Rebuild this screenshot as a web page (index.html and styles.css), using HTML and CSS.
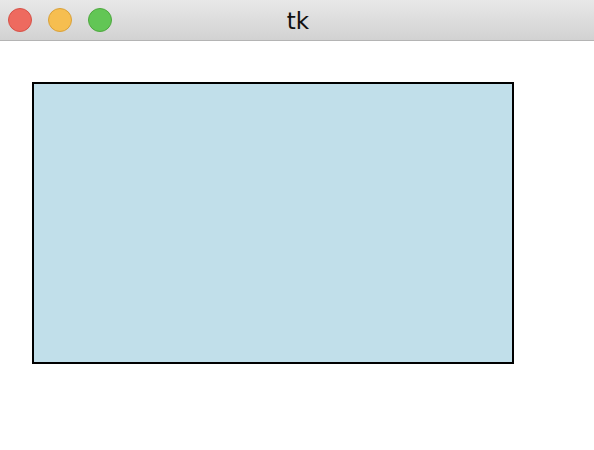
FILE: index.html
```html
<!DOCTYPE html>
<html>
<head>
<meta charset="utf-8">
<link rel="stylesheet" href="styles.css">
</head>
<body>
<div class="window">
  <div class="titlebar">
    <div class="lights">
      <span class="light red"></span>
      <span class="light yellow"></span>
      <span class="light green"></span>
    </div>
    <div class="title">tk</div>
  </div>
  <div class="content">
    <div class="canvas-rect"></div>
  </div>
</div>
</body>
</html>
```
FILE: styles.css
```css
html, body {
  margin: 0;
  padding: 0;
  background: #ffffff;
}
.window {
  width: 594px;
  height: 450px;
  display: flex;
  flex-direction: column;
  font-family: "DejaVu Sans", "Liberation Sans", sans-serif;
}
.titlebar {
  position: relative;
  height: 40px;
  flex: none;
  background: linear-gradient(#e8e8e8, #d2d2d2);
  border-bottom: 1px solid #b4b4b4;
  display: flex;
  align-items: center;
  justify-content: center;
}
.lights {
  position: absolute;
  left: 8px;
  top: 8px;
  display: flex;
  gap: 16px;
}
.light {
  width: 22px;
  height: 22px;
  border-radius: 50%;
  border: 1px solid;
}
.red { background: #ee6a5f; border-color: #d65248; }
.yellow { background: #f6be50; border-color: #d9a13a; }
.green { background: #62c655; border-color: #4ea83f; }
.title {
  font-size: 23px;
  color: #111111;
  margin-left: 2px;
  margin-top: 1px;
}
.content {
  flex: 1;
  padding: 41px 0 0 32px;
}
.canvas-rect {
  width: 478px;
  height: 278px;
  background: #c1dfea;
  border: 2px solid #000000;
}
```
